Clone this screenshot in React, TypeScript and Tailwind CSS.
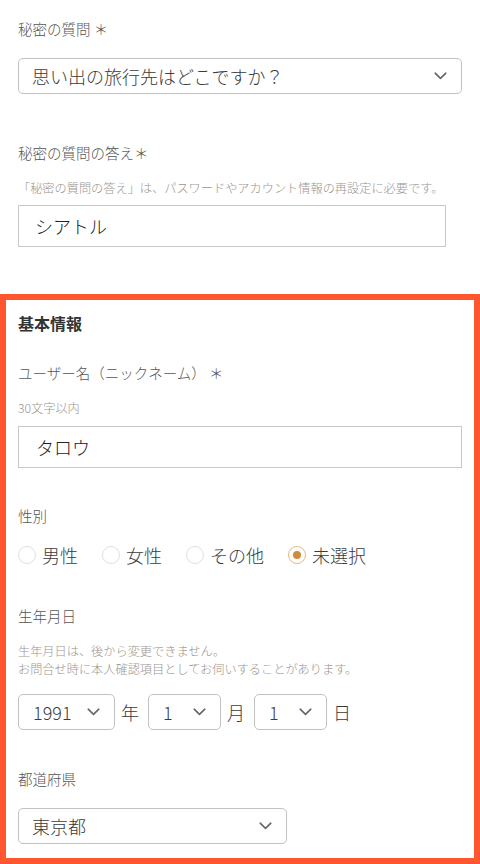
import React from "react";

const font = { fontFamily: '"Noto Sans CJK JP", "Noto Sans", sans-serif' };

function Chevron({ className = "" }: { className?: string }) {
  return (
    <svg width="13" height="8" viewBox="0 0 13 8" className={className} fill="none">
      <path d="M1.2 1.2 L6.5 6.3 L11.8 1.2" stroke="#666" strokeWidth="1.6" strokeLinecap="round" strokeLinejoin="round" />
    </svg>
  );
}

function Select({ value, className = "" }: { value: string; className?: string }) {
  return (
    <div
      className={`flex items-center justify-between h-[36px] rounded-[5px] border border-[#c2c2c2] bg-white pl-[13px] pr-[14px] ${className}`}
    >
      <span className="text-[18px] leading-none text-[#3a3a3a] font-light">{value}</span>
      <Chevron />
    </div>
  );
}

function Radio({ label, checked = false }: { label: string; checked?: boolean }) {
  return (
    <div className="flex items-center">
      <span
        className={`flex items-center justify-center w-[18px] h-[18px] rounded-full border ${
          checked ? "border-[#e6b888]" : "border-[#e0e0e0]"
        }`}
      >
        {checked && <span className="w-[8px] h-[8px] rounded-full bg-[#d08b3d]" />}
      </span>
      <span className="ml-[6px] text-[18px] leading-[28px] text-[#3a3a3a] font-light">{label}</span>
    </div>
  );
}

const labelCls = "text-[14.5px] leading-[20px] text-[#555] font-light";
const helpCls = "text-[12.2px] leading-[16px] text-[#9a9590] font-light";

export default function App() {
  return (
    <div className="w-[480px] h-[864px] bg-white overflow-hidden" style={font}>
      <div className="px-[18px] pt-[19px]">
        <div className={labelCls}>秘密の質問 ＊</div>
        <Select value="思い出の旅行先はどこですか？" className="mt-[19px] w-[444px]" />
        <div className={`mt-[49px] ${labelCls}`}>秘密の質問の答え＊</div>
        <div className={`mt-[17px] ${helpCls}`}>
          「秘密の質問の答え」は、パスワードやアカウント情報の再設定に必要です。
        </div>
        <div className="mt-[9px] w-[428px] h-[42px] border border-[#c8c8c8] flex items-center pl-[16px] text-[18px] text-[#222] font-light">
          シアトル
        </div>
      </div>

      <div className="mt-[47px] border-[6px] border-[#ff5630] h-[570px] pl-[12px] pr-[12px] pt-[11px]">
        <div className="text-[16px] leading-[24px] font-bold text-[#333]">基本情報</div>
        <div className={`mt-[28px] ${labelCls}`}>ユーザー名（ニックネーム） ＊</div>
        <div className={`mt-[17px] ${helpCls}`}>30文字以内</div>
        <div className="mt-[10px] h-[42px] border border-[#c8c8c8] flex items-center pl-[17px] text-[18px] text-[#222] font-light">
          タロウ
        </div>

        <div className={`mt-[38px] ${labelCls}`}>性別</div>
        <div className="mt-[15px] flex items-center gap-[24px]">
          <Radio label="男性" />
          <Radio label="女性" />
          <Radio label="その他" />
          <Radio label="未選択" checked />
        </div>

        <div className={`mt-[37px] ${labelCls}`}>生年月日</div>
        <div className="mt-[17px] text-[12.2px] leading-[17.5px] text-[#9a9590] font-light">
          <div>生年月日は、後から変更できません。</div>
          <div>お問合せ時に本人確認項目としてお伺いすることがあります。</div>
        </div>
        <div className="mt-[16px] flex items-center">
          <Select value="1991" className="w-[97px] h-[35px] pl-[14px] pr-[11px]" />
          <span className="ml-[6px] text-[18px] text-[#3a3a3a] font-light">年</span>
          <Select value="1" className="ml-[9px] w-[73px] h-[35px] pl-[14px] pr-[10px]" />
          <span className="ml-[6px] text-[18px] text-[#3a3a3a] font-light">月</span>
          <Select value="1" className="ml-[9px] w-[73px] h-[35px] pl-[14px] pr-[10px]" />
          <span className="ml-[6px] text-[18px] text-[#3a3a3a] font-light">日</span>
        </div>

        <div className={`mt-[39px] ${labelCls}`}>都道府県</div>
        <Select value="東京都" className="mt-[19px] w-[269px] h-[35px]" />
      </div>
    </div>
  );
}
